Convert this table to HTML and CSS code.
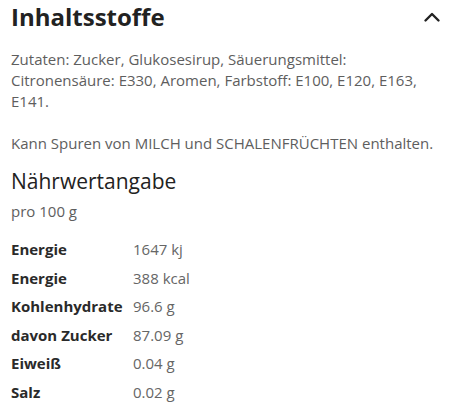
FILE: index.html
```html
<!DOCTYPE html>
<html lang="de">
<head>
<meta charset="utf-8">
<link rel="stylesheet" href="styles.css">
</head>
<body>
<section class="panel">
  <div class="panel-header">
    <h2 class="panel-title">Inhaltsstoffe</h2>
    <svg class="chevron" width="18" height="12" viewBox="0 0 18 12" aria-hidden="true">
      <path d="M2.5 9.5 L9 3 L15.5 9.5" fill="none" stroke="#222" stroke-width="2.4" stroke-linecap="round" stroke-linejoin="round"/>
    </svg>
  </div>
  <p class="text">Zutaten: Zucker, Glukosesirup, Säuerungsmittel: Citronensäure: E330, Aromen, Farbstoff: E100, E120, E163, E141.</p>
  <p class="text allergen">Kann Spuren von MILCH und SCHALENFRÜCHTEN enthalten.</p>
  <h3 class="subtitle">Nährwertangabe</h3>
  <p class="text per">pro 100 g</p>
  <div class="nutrition">
    <div class="label">Energie</div><div class="value">1647 kj</div>
    <div class="label">Energie</div><div class="value">388 kcal</div>
    <div class="label">Kohlenhydrate</div><div class="value">96.6 g</div>
    <div class="label">davon Zucker</div><div class="value">87.09 g</div>
    <div class="label">Eiweiß</div><div class="value">0.04 g</div>
    <div class="label">Salz</div><div class="value">0.02 g</div>
  </div>
</section>
</body>
</html>
```

FILE: styles.css
```css
html, body {
  margin: 0;
  padding: 0;
  background: #fff;
}
body {
  font-family: "Open Sans", "Noto Sans", sans-serif;
  color: #5e5e5e;
}
.panel {
  padding: 0 9px 0 11px;
}
.panel-header {
  display: flex;
  justify-content: space-between;
  align-items: center;
}
.panel-title {
  margin: 0;
  font-size: 24px;
  line-height: 33px;
  font-weight: 700;
  color: #222;
}
.chevron {
  display: block;
  margin-top: 0;
}
.text {
  margin: 16px 0 0;
  font-size: 15px;
  line-height: 21px;
  padding-right: 6px;
}
.allergen {
  margin-top: 21px;
}
.subtitle {
  margin: 11.5px 0 0;
  font-size: 21px;
  line-height: 30px;
  font-weight: 400;
  color: #222;
}
.per {
  margin-top: 5.7px;
}
.nutrition {
  margin-top: 13.5px;
  display: grid;
  grid-template-columns: 122px auto;
  font-size: 15px;
  line-height: 21px;
}
.label, .value {
  padding: 3.75px 0;
}
.label {
  font-weight: 700;
  color: #2a2a2a;
}
.value {
  color: #666;
}
```
